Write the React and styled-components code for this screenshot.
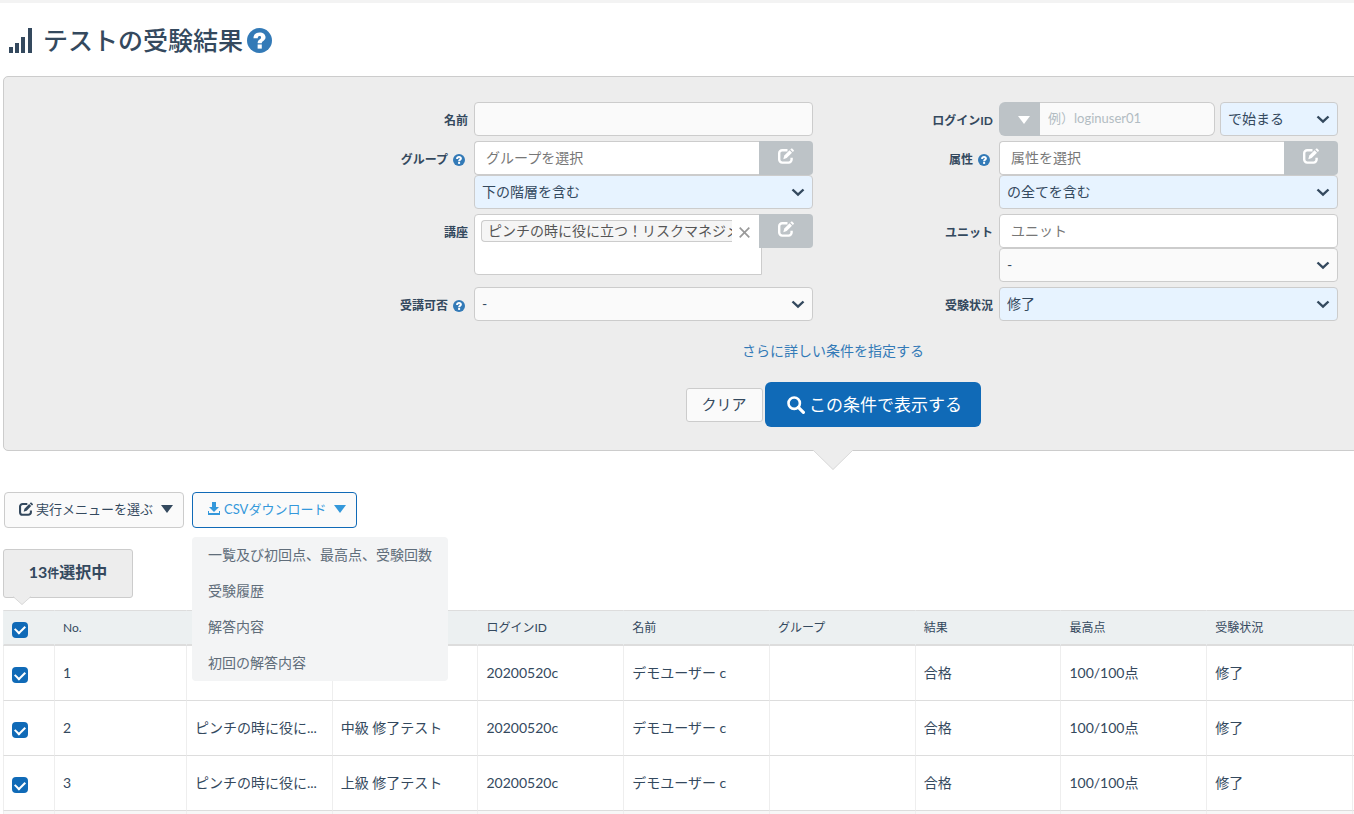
import React from 'react'
import styled, { createGlobalStyle } from 'styled-components'

const navy = '#34495e'
const line = '#cccccc'
const blue = '#106ab7'

const GlobalStyle = createGlobalStyle`
  * { box-sizing: border-box; }
  body {
    margin: 0;
    background: #fff;
    color: #34495e;
    font-family: Lato, "Noto Sans CJK JP", sans-serif;
    font-size: 14px;
    line-height: 20px;
  }
  button, input, select { font: inherit; color: inherit; margin: 0; }
  button { cursor: pointer; }
`

const SignalIcon = () => (
  <svg width="25" height="25" viewBox="0 0 25 25" fill="currentColor" aria-hidden="true">
    <rect x="1" y="19" width="4" height="6" />
    <rect x="7" y="15" width="4" height="10" />
    <rect x="13" y="9" width="4" height="16" />
    <rect x="20" y="0" width="4" height="25" />
  </svg>
)

const HelpIcon = ({ size }) => (
  <svg width={size} height={size} viewBox="0 0 24 24" role="img" aria-label="ヘルプ">
    <circle cx="12" cy="12" r="12" fill="#337ab7" />
    <path d="M6.2 9.8C6.3 6.2 8.7 4.2 12.1 4.2c3.4 0 5.7 1.9 5.700 4.700 0 3.400-3.600 3.500-3.600 5.700H10.200c0-3.800 3.300-3.500 3.300-5.600 0-.8-.6-1.300-1.500-1.300-1 0-1.600.7-1.700 2.100z" fill="#fff" />
    <rect x="10.200" y="15.800" width="4" height="4" fill="#fff" />
  </svg>
)

const EditIcon = ({ size = 16 }) => (
  <svg width={size} height={size} viewBox="0 0 16 16" fill="none" aria-hidden="true">
    <path d="M9.5 2.2H4.200a3 3 0 0 0-3 3v6.400a3 3 0 0 0 3 3h6.400a3 3 0 0 0 3-3V9.800" stroke="currentColor" strokeWidth="2.4" />
    <path d="M5.300 11.200l1-3.600 5.300-5.300 2.400 2.400-5.300 5.300z" fill="currentColor" />
    <path d="M12.300 1.600l1-1 .8-.1 1.800 1.800v.7l-1.100 1.100z" fill="currentColor" />
  </svg>
)

const DownloadIcon = () => (
  <svg width="14" height="14" viewBox="0 0 14 14" fill="currentColor" aria-hidden="true">
    <path d="M5 0h4v5h3L7 10 2 5h3z" />
    <path d="M1 9h1v2h10V9h1v4H1z" />
  </svg>
)

const SearchIcon = () => (
  <svg width="18" height="18" viewBox="0 0 18 18" fill="none" stroke="currentColor" aria-hidden="true">
    <circle cx="7.2" cy="7.2" r="5.7" strokeWidth="2.6" />
    <path d="M11.4 11.4l5 5" strokeWidth="3.2" strokeLinecap="round" />
  </svg>
)

const CaretIcon = () => (
  <svg width="12" height="8" viewBox="0 0 12 8" fill="currentColor" aria-hidden="true">
    <path d="M0 0h12L6 8z" />
  </svg>
)

const ChevronIcon = () => (
  <svg width="14" height="9" viewBox="0 0 14 9" fill="none" aria-hidden="true">
    <path d="M1.5 1.5L7 6.700l5.500-5.200" stroke={navy} strokeWidth="2.4" />
  </svg>
)

const CloseIcon = () => (
  <svg width="11" height="11" viewBox="0 0 11 11" fill="none" aria-hidden="true">
    <path d="M.7.7l9.600 9.600M10.300.7L.7 10.300" stroke="#999" strokeWidth="1.7" />
  </svg>
)

const Viewport = styled.div`
  height: 100vh;
  overflow: auto;
  scrollbar-width: none;
  border-top: 3px solid #f3f3f3;
`
// the result table needs this much room, narrower windows scroll sideways
const Page = styled.main`
  min-width: 1663px;
  padding-left: 3px;
`
const Title = styled.h1`
  display: flex;
  align-items: center;
  margin: 0;
  padding: 1px 5px 0;
  height: 73px;
  font-size: 25px;
  font-weight: 500;
  line-height: 36px;
  svg:first-child { margin-right: 10px; }
  svg:last-child { margin-left: 4px; }
`

const Panel = styled.form`
  position: relative;
  padding: 25px 0 23px;
  border: 1px solid ${line};
  border-radius: 5px;
  background: #ededed;
`
const PanelArrow = styled.svg`
  position: absolute;
  left: 50%;
  bottom: -20px;
  transform: translateX(-50%);
`
const Fields = styled.div`
  display: grid;
  grid-template-columns: 525px 525px;
  justify-content: end;
  row-gap: 5px;
  padding-right: 324px;
`
const Field = styled.div`
  display: flex;
  align-items: flex-start;
`
const FieldLabel = styled.label`
  display: flex;
  flex: 1;
  align-items: center;
  justify-content: flex-end;
  gap: 5px;
  height: 34px;
  padding: 4px ${p => (p.$help ? 9 : 6)}px 0 0;
  font-size: 12px;
  font-weight: 700;
`
const Controls = styled.div`
  width: 339px;
`
const ControlLine = styled.div`
  display: flex;
  align-items: flex-start;
  gap: ${p => p.$gap || 0}px;
`
const PrefixGroup = styled.div`
  display: flex;
  flex: 1;
  min-width: 0;
`
const TextInput = styled.input`
  flex: 1;
  min-width: 0;
  height: 34px;
  padding: 0 ${p => (p.$wide ? 11 : 8)}px 2px;
  border: 1px solid ${line};
  border-radius: ${p => (p.$joined === 'right' ? '4px 0 0 4px' : p.$joined === 'left' ? '0 6px 6px 0' : '4px')};
  border-right-width: ${p => (p.$joined === 'right' ? 0 : 1)}px;
  border-left-width: ${p => (p.$joined === 'left' ? 0 : 1)}px;
  background: ${p => (p.$wide ? '#fff' : '#fafafa')};
  font-size: ${p => (p.$wide ? 14 : 13)}px;
  &::placeholder {
    color: ${p => (p.$wide ? '#777' : '#b2bcc2')};
    opacity: 1;
  }
`
const SelectBox = styled.div`
  position: relative;
  width: ${p => p.$width || '100%'};
  svg {
    position: absolute;
    right: 8px;
    top: 13px;
    pointer-events: none;
  }
`
const Select = styled.select`
  display: block;
  width: 100%;
  height: 34px;
  padding: 0 28px 1px 7px;
  border: 1px solid ${line};
  border-radius: 4px;
  background: ${p => (p.$active ? '#e7f3ff' : '#fafafa')};
  appearance: none;
`
const PickButton = styled.button`
  display: flex;
  justify-content: center;
  flex: none;
  width: 54px;
  height: 34px;
  padding: 7px 0 0;
  border: 0;
  border-radius: 0 4px 4px 0;
  background: #bdc3c7;
  color: #fff;
`
const PrefixButton = styled.button`
  display: flex;
  align-items: center;
  justify-content: flex-end;
  width: 41px;
  height: 34px;
  padding: 2px 10px 0 0;
  border: 0;
  border-radius: 6px 0 0 6px;
  background: #bdc3c7;
  color: #fff;
`
const TagBox = styled.div`
  display: flex;
  align-items: flex-start;
  flex: 1;
  min-width: 0;
  height: 61px;
  margin-right: -3px;
  padding: 5px 6px;
  border: 1px solid ${line};
  border-radius: 4px 0 0 4px;
  background: #fff;
`
const Tag = styled.span`
  flex: none;
  width: 251px;
  height: 22px;
  padding-left: 6px;
  border: 1px solid ${line};
  border-right: 0;
  border-radius: 4px 0 0 4px;
  background: #f5f5f5;
  color: #555;
  white-space: nowrap;
  overflow: hidden;
`
const TagRemove = styled.button`
  display: flex;
  flex: none;
  padding: 7px;
  border: 0;
  background: none;
`
const MoreLink = styled.a`
  display: block;
  width: fit-content;
  margin: 20px auto 21px;
  color: #337ab7;
  text-decoration: none;
`
const Actions = styled.div`
  display: flex;
  align-items: center;
  justify-content: center;
  gap: 2px;
`
const ClearButton = styled.button`
  width: 77px;
  height: 34px;
  padding: 0 0 2px;
  border: 1px solid ${line};
  border-radius: 3px;
  background: #fafafa;
  font-size: 15px;
`
const SubmitButton = styled.button`
  display: flex;
  align-items: center;
  justify-content: center;
  gap: 4px;
  width: 216px;
  height: 45px;
  padding: 0 0 0 4px;
  border: 0;
  border-radius: 6px;
  background: ${blue};
  color: #fff;
  font-size: 17px;
`

const Toolbar = styled.div`
  display: flex;
  gap: 8px;
  margin: 41px 0 0 1px;
`
const MenuWrap = styled.div`
  position: relative;
`
const MenuButton = styled.button`
  display: flex;
  align-items: center;
  height: 36px;
  padding: 0 10px 2px 14px;
  border: 1px solid ${p => (p.$open ? blue : line)};
  border-radius: 4px;
  background: #fafafa;
  color: ${p => (p.$open ? '#3498db' : navy)};
  font-size: 13px;
  svg:first-child { margin-right: 3px; }
  svg:last-child { margin-left: 8px; }
`
const Menu = styled.ul`
  position: absolute;
  z-index: 2;
  top: 45px;
  left: 0;
  width: 256px;
  margin: 0;
  padding: 0;
  border-radius: 4px;
  background: #f3f4f5;
  list-style: none;
`
const MenuLink = styled.a`
  display: block;
  height: 36px;
  padding: 8px 16px;
  color: #606d7a;
  text-decoration: none;
  white-space: nowrap;
`

const Selected = styled.div`
  position: relative;
  display: flex;
  align-items: baseline;
  justify-content: center;
  width: 130px;
  height: 49px;
  margin: 21px 0 12px;
  padding-top: 11px;
  border: 1px solid ${line};
  border-radius: 3px;
  background: #ededed;
  font-size: 16px;
  font-weight: 700;
  line-height: 22px;
  small { font-size: 12px; }
`
const SelectedArrow = styled.svg`
  position: absolute;
  left: 9px;
  bottom: -8px;
`
const ResultTable = styled.table`
  width: 100%;
  border-collapse: separate;
  border-spacing: 0;
  table-layout: fixed;
  text-align: left;
`
const Col = styled.col`
  width: ${p => p.$width};
`
const HeadCell = styled.th`
  height: 36px;
  padding: 0 8px;
  border-top: 1px solid #ddd;
  border-left: 1px solid #ecf0f1;
  border-bottom: 2px solid #ddd;
  background: #ecf0f1;
  font-size: 12px;
  font-weight: 400;
`
const Cell = styled.td`
  height: 55px;
  padding: 0 8px;
  border-left: 1px solid #eee;
  border-bottom: 1px solid #ddd;
  background: ${p => (p.$shade ? '#f7f7f7' : '#fff')};
  white-space: nowrap;
`
const Check = styled.input.attrs({ type: 'checkbox' })`
  display: grid;
  place-content: center;
  width: 16px;
  height: 16px;
  margin: 4px 0 0;
  border-radius: 4px;
  background: ${blue};
  appearance: none;
  &:checked::before {
    content: '';
    width: 8px;
    height: 5px;
    margin-bottom: 2px;
    border: solid #fff;
    border-width: 0 0 2px 2px;
    transform: rotate(-45deg);
  }
`

const LabeledField = ({ id, label, help, children }) => (
  <Field>
    <FieldLabel htmlFor={id} $help={help}>{label}{help && <HelpIcon size={12} />}</FieldLabel>
    <Controls>{children}</Controls>
  </Field>
)

const Dropdown = ({ id, label, text, active, width }) => (
  <SelectBox $width={width}>
    <Select id={id} aria-label={label} $active={active}><option>{text}</option></Select>
    <ChevronIcon />
  </SelectBox>
)

const downloads = ['一覧及び初回点、最高点、受験回数', '受験履歴', '解答内容', '初回の解答内容']
const heads = ['No.', '', '', 'ログインID', '名前', 'グループ', '結果', '最高点', '受験状況', '']
const rows = [
  ['1', '', '', '20200520c', 'デモユーザー c', '', '合格', '100/100点', '修了', ''],
  ['2', 'ピンチの時に役に...', '中級 修了テスト', '20200520c', 'デモユーザー c', '', '合格', '100/100点', '修了', ''],
  ['3', 'ピンチの時に役に...', '上級 修了テスト', '20200520c', 'デモユーザー c', '', '合格', '100/100点', '修了', ''],
]

const App = () => {
  return (
    <Viewport>
      <GlobalStyle />
      <Page>
        <Title><SignalIcon />テストの受験結果<HelpIcon size={25} /></Title>

        <Panel onSubmit={e => e.preventDefault()}>
          <Fields>
            <LabeledField id="name" label="名前">
              <ControlLine><TextInput id="name" /></ControlLine>
            </LabeledField>
            <LabeledField id="login" label="ログインID">
              <ControlLine $gap={5}>
                <PrefixGroup>
                  <PrefixButton type="button" aria-label="検索方法"><CaretIcon /></PrefixButton>
                  <TextInput id="login" placeholder="例）loginuser01" $joined="left" />
                </PrefixGroup>
                <Dropdown label="一致条件" text="で始まる" active width="118px" />
              </ControlLine>
            </LabeledField>

            <LabeledField id="group" label="グループ" help>
              <ControlLine>
                <TextInput id="group" placeholder="グループを選択" $wide $joined="right" />
                <PickButton type="button" aria-label="グループを選択"><EditIcon /></PickButton>
              </ControlLine>
              <Dropdown label="階層" text="下の階層を含む" active />
            </LabeledField>
            <LabeledField id="attr" label="属性" help>
              <ControlLine>
                <TextInput id="attr" placeholder="属性を選択" $wide $joined="right" />
                <PickButton type="button" aria-label="属性を選択"><EditIcon /></PickButton>
              </ControlLine>
              <Dropdown label="属性の条件" text="の全てを含む" active />
            </LabeledField>

            <LabeledField id="course" label="講座">
              <ControlLine>
                <TagBox>
                  <Tag>ピンチの時に役に立つ！リスクマネジメ</Tag>
                  <TagRemove type="button" aria-label="削除"><CloseIcon /></TagRemove>
                </TagBox>
                <PickButton id="course" type="button" aria-label="講座を選択"><EditIcon /></PickButton>
              </ControlLine>
            </LabeledField>
            <LabeledField id="unit" label="ユニット">
              <ControlLine><TextInput id="unit" placeholder="ユニット" $wide /></ControlLine>
              <Dropdown label="ユニットの条件" text="-" />
            </LabeledField>

            <LabeledField id="allowed" label="受講可否" help>
              <Dropdown id="allowed" text="-" />
            </LabeledField>
            <LabeledField id="status" label="受験状況">
              <Dropdown id="status" text="修了" active />
            </LabeledField>
          </Fields>

          <MoreLink href="#more">さらに詳しい条件を指定する</MoreLink>
          <Actions>
            <ClearButton type="reset">クリア</ClearButton>
            <SubmitButton type="submit"><SearchIcon />この条件で表示する</SubmitButton>
          </Actions>
          <PanelArrow width="40" height="20" viewBox="0 0 40 20" aria-hidden="true">
            <path d="M0 0h40L20 20z" fill="#ededed" />
            <path d="M0 0l20 19.500L40 0" fill="none" stroke="#d9d9d9" />
          </PanelArrow>
        </Panel>

        <Toolbar>
          <MenuButton type="button"><EditIcon size={14} />実行メニューを選ぶ<CaretIcon /></MenuButton>
          <MenuWrap>
            <MenuButton type="button" $open aria-expanded="true"><DownloadIcon />CSVダウンロード<CaretIcon /></MenuButton>
            <Menu>
              {downloads.map(d => <li key={d}><MenuLink href="#csv">{d}</MenuLink></li>)}
            </Menu>
          </MenuWrap>
        </Toolbar>

        <Selected>
          13<small>件</small>選択中
          <SelectedArrow width="18" height="9" viewBox="0 0 18 9" aria-hidden="true">
            <path d="M0 0h18L9 9z" fill="#ededed" />
            <path d="M0 .5l9 8 9-8" fill="none" stroke="#d9d9d9" />
          </SelectedArrow>
        </Selected>

        <ResultTable>
          <colgroup>
            <Col $width="51px" />
            <Col $width="132px" />
            {heads.slice(2).map((h, i) => <Col key={i} $width="8.78%" />)}
            <Col />
          </colgroup>
          <thead>
            <tr>
              <HeadCell><Check defaultChecked aria-label="すべて選択" /></HeadCell>
              {heads.map((h, i) => <HeadCell key={i}>{h}</HeadCell>)}
            </tr>
          </thead>
          <tbody>
            {rows.map(row => (
              <tr key={row[0]}>
                <Cell><Check defaultChecked aria-label={`No.${row[0]}`} /></Cell>
                {row.map((text, i) => <Cell key={i}>{text}</Cell>)}
              </tr>
            ))}
            <tr><Cell $shade />{heads.map((h, i) => <Cell key={i} $shade />)}</tr>
          </tbody>
        </ResultTable>
      </Page>
    </Viewport>
  )
}

export default App
